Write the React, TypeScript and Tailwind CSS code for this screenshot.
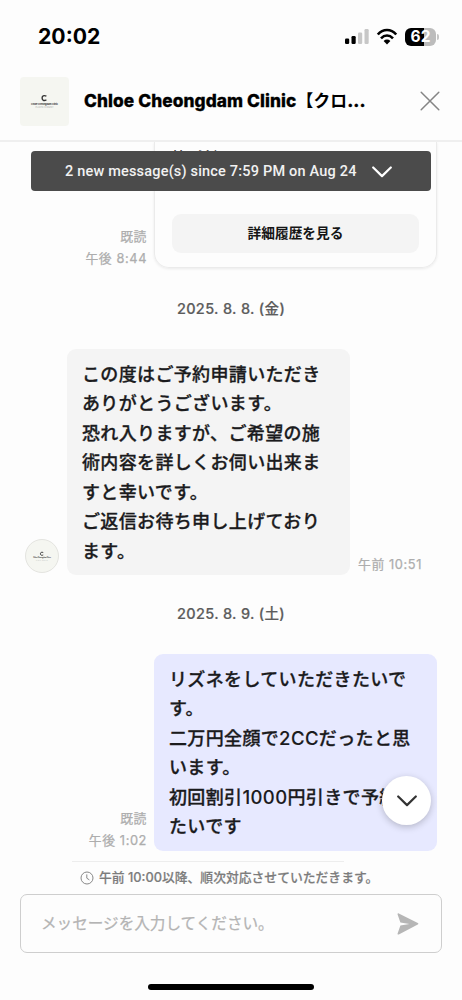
import React from "react";

const jp = "font-['Inter','Noto_Sans_CJK_JP',sans-serif]";

function DateLabel({ children }: { children: React.ReactNode }) {
  return <div className="h-5 text-center text-[14.5px] leading-5 font-medium tracking-[0.35px] text-[#5c5c5c] [-webkit-text-stroke:0.2px_#5c5c5c]">{children}</div>;
}

function Meta({ time, read }: { time: string; read?: boolean }) {
  return (
    <div className="shrink-0 text-right text-[12.8px] leading-[22px] font-normal tracking-[0.6px] whitespace-nowrap text-[#adadad] [-webkit-text-stroke:0.25px_#adadad]">
      {read && <div>既読</div>}
      <div>{time}</div>
    </div>
  );
}

function Lines({ lines }: { lines: string[] }) {
  return (
    <>
      {lines.map((line) => (
        <p key={line} className="h-[29.5px] text-[18px] leading-[29.5px] font-medium tracking-[0.35px] whitespace-nowrap text-[#1b1b1d] [-webkit-text-stroke:0.3px_#1b1b1d]">
          {line.split(/([0-9A-Z]+)/).map((part, i) =>
            i % 2 ? <span key={i} className="text-[18.5px] tracking-[0.4px] [-webkit-text-stroke:0.1px_#1b1b1d]">{part}</span> : part
          )}
        </p>
      ))}
    </>
  );
}

function ClinicMark({ className }: { className: string }) {
  return (
    <svg viewBox="0 0 49 49" className={className} aria-hidden="true">
      <path d="M26.4 19.2c-2.7-1.3-4.3-.1-4.3 1.9 0 2.2 1.8 3 4.3 1.8" fill="none" stroke="#333" strokeWidth="1.4" />
      <text x="24.5" y="28" textAnchor="middle" fontSize="2.4" fontWeight="700" fontFamily="Inter, sans-serif" fill="#333" textLength="27">Chloe Cheongdam Clinic</text>
      <text x="24.5" y="31.4" textAnchor="middle" fontSize="1.9" fontFamily="Inter, sans-serif" fill="#aaa" textLength="18">PLASTIC SURGERY</text>
    </svg>
  );
}

export default function App() {
  return (
    <div className={`relative flex h-[1000px] w-[462px] flex-col overflow-hidden bg-[#fdfdfd] ${jp}`}>
      <div className="flex h-[72px] shrink-0 items-center justify-between pt-px pr-[23px] pl-[38px]">
        <span className="pt-px text-[21.2px] font-bold text-black">20:02</span>
        <div className="flex items-center">
          <svg width="26" height="18" viewBox="0 0 26 18" className="mr-[5px]">
            <rect x="0" y="10.5" width="4.2" height="5.5" rx="1.2" />
            <rect x="6.5" y="8" width="4.2" height="8" rx="1.2" />
            <rect x="13" y="4.5" width="4.2" height="11.5" rx="1.2" fill="#c7c7c7" />
            <rect x="19.5" y="1" width="4.2" height="15" rx="1.2" fill="#c7c7c7" />
          </svg>
          <svg width="22" height="18" viewBox="0 0 22 18" className="mr-[7px]" fill="none" stroke="black" strokeWidth="2.6">
            <path d="M1.8 6.5C7 .4 15 .4 20.2 6.5" />
            <path d="M5 10.4c3.6-3.8 8.4-3.8 12 0" />
            <path d="M7.6 12.9c2-1.8 4.8-1.8 6.8 0L11 16.4Z" fill="black" stroke="none" />
          </svg>
          <div className="flex h-[18px] w-[31px] items-center justify-center rounded-[6px] bg-[linear-gradient(to_right,#000_62%,#bcbcbc_62%)] text-[15.5px] font-bold text-white">62</div>
          <div className="ml-px h-[6px] w-[2px] rounded-r-full bg-[#c5c5c5]" />
        </div>
      </div>

      <header className="flex h-[70px] shrink-0 items-start border-b-2 border-[#efefef] pt-[4.5px] pr-[22px] pl-5">
        <div className="size-[49px] rounded-[4px] bg-[#f5f6f1]">
          <ClinicMark className="size-full" />
        </div>
        <h1 className="ml-[15px] w-[300px] text-[17.3px] leading-[48px] font-extrabold tracking-[0.1px] whitespace-nowrap text-black [-webkit-text-stroke:0.3px_#000]">
          Chloe Cheongdam Clinic<span className="text-[16.8px] font-bold [-webkit-text-stroke:0px]">【クロ</span>...
        </h1>
        <svg width="20" height="20" viewBox="0 0 20 20" className="mt-[14px] ml-auto shrink-0" stroke="#858585" strokeWidth="1.5" strokeLinecap="round">
          <path d="m1.2 1.2 17.6 17.6M18.8 1.2 1.2 18.8" />
        </svg>
      </header>

      <main className="flex h-[719px] shrink-0 flex-col overflow-hidden">
        <div className="flex h-[126px] shrink-0 items-end justify-end pr-[25px]">
          <div className="mr-[7px] -mb-[2px]"><Meta read time="午後 8:44" /></div>
          <div className="h-[126px] w-[283px] rounded-b-[15px] border border-t-0 border-[#ebebeb] px-[17px] pt-[3px] shadow-[0_1px_3px_rgba(0,0,0,0.08)]">
            <p className="h-[23px] text-[15px] leading-[25px] font-medium text-[#333]">第2希望</p>
            <p className="h-[46px] text-[14px] leading-[26px] font-medium text-[#333]">2025. 8. 18. (月)</p>
            <div className="flex h-[39px] items-center justify-center rounded-[9px] bg-[#f4f4f4] text-[13.7px] font-bold text-[#151515]">詳細履歴を見る</div>
          </div>
        </div>
        <div className="mt-[31px]"><DateLabel>2025. 8. 8. (金)</DateLabel></div>
        <div className="mt-[29.5px] flex shrink-0 items-end pl-[25px]">
          <div className="mb-[2px] size-[34px] shrink-0 rounded-full border border-[#e4e4e0] bg-[#f5f6f1]">
            <ClinicMark className="size-full" />
          </div>
          <div className="ml-[8px] h-[226px] w-[283px] shrink-0 rounded-[9px] bg-[#f4f4f4] pt-[11px] pl-[15px]">
            <Lines lines={["この度はご予約申請いただき", "ありがとうございます。", "恐れ入りますが、ご希望の施", "術内容を詳しくお伺い出来ま", "すと幸いです。", "ご返信お待ち申し上げており", "ます。"]} />
          </div>
          <div className="-mb-px ml-[8px]"><Meta time="午前 10:51" /></div>
        </div>
        <div className="mt-[29.5px]"><DateLabel>2025. 8. 9. (土)</DateLabel></div>
        <div className="mt-[29.5px] flex shrink-0 items-end justify-end pr-[25px]">
          <div className="mr-[7px] -mb-px"><Meta read time="午後 1:02" /></div>
          <div className="h-[197px] w-[283px] shrink-0 rounded-[9px] bg-[#e7e9ff] pt-[11px] pl-[15px]">
            <Lines lines={["リズネをしていただきたいで", "す。", "二万円全顔で2CCだったと思", "います。", "初回割引1000円引きで予約し", "たいです"]} />
          </div>
        </div>
      </main>

      <footer className="flex flex-1 flex-col px-5">
        <div className="ml-[52px] h-px w-[272px] shrink-0 bg-[#ededed]" />
        <div className="ml-[60px] flex h-[32px] shrink-0 items-center gap-[5px] text-[12.8px] font-medium whitespace-nowrap text-[#7c7c7c] [-webkit-text-stroke:0.2px_#7c7c7c]">
          <svg width="14" height="14" viewBox="0 0 14 14" fill="none" stroke="#888" strokeWidth="1" className="shrink-0">
            <circle cx="7" cy="7" r="6" />
            <path d="M6.8 3.4v3.8l2.6 1.7" />
          </svg>
          <span>午前 10:00以降、順次対応させていただきます。</span>
        </div>
        <div className="flex h-[59px] w-[422px] shrink-0 items-center justify-between rounded-[7px] border border-[#cecece] pr-[22px] pl-[20px]">
          <span className="text-[15.6px] font-normal whitespace-nowrap text-[#b4b4b4] [-webkit-text-stroke:0.25px_#b4b4b4]">メッセージを入力してください。</span>
          <svg width="22" height="22" viewBox="0 0 22 22" fill="#b6b6b6"><path d="M.5 1.3c0-.9.7-1.1 1.3-.8l19 9.6c.7.4.7 1.1 0 1.5l-19 9.8C1 21.8.3 21.3.6 20.5l2.8-8.1 9-1.4-9-1.5Z" /></svg>
        </div>
        <div className="mt-[31px] h-[6px] w-[166px] shrink-0 self-center rounded-full bg-black" />
      </footer>

      <div className="absolute top-[151px] left-[31px] flex h-[40px] w-[400px] items-center rounded-[4px] bg-[#4b4b4b] pt-[2px] pl-[34px] font-[Roboto,sans-serif] text-[14.5px] font-medium tracking-[0.19px] text-[#f1f1f1]">
        <span className="whitespace-nowrap">2 new message(s) since 7:59 PM on Aug 24</span>
        <svg width="20" height="12" viewBox="0 0 20 12" className="absolute top-[15px] left-[341px]" fill="none" stroke="#fff" strokeWidth="2.2" strokeLinecap="round" strokeLinejoin="round"><path d="m1.2 1.5 8.8 8.6 8.8-8.6" /></svg>
      </div>
      <button className="absolute top-[776px] left-[382px] flex size-[49px] items-center justify-center rounded-full bg-white shadow-[0_2px_7px_rgba(0,0,0,0.22)]" aria-label="最新のメッセージへ">
        <svg width="20" height="12" viewBox="0 0 20 12" fill="none" stroke="#333" strokeWidth="2.2" strokeLinecap="round" strokeLinejoin="round"><path d="m1.2 1.5 8.8 8.6 8.8-8.6" /></svg>
      </button>
    </div>
  );
}
